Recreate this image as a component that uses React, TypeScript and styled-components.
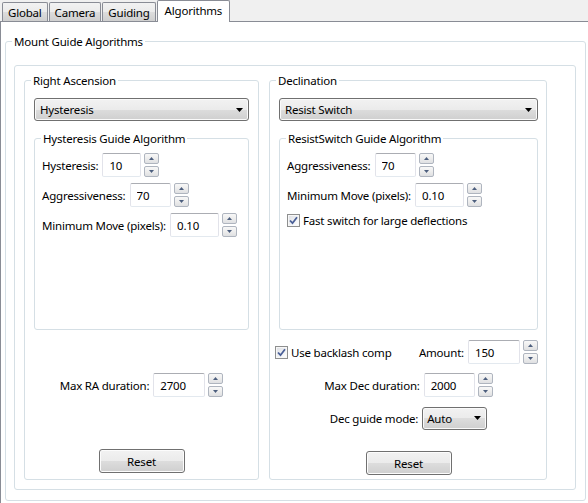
import React from "react";
import styled, { createGlobalStyle } from "styled-components";

const GlobalStyle = createGlobalStyle`
  html, body {
    margin: 0;
    padding: 0;
    background: #f0f0f0;
  }
  body {
    font-family: "Noto Sans", "Open Sans", sans-serif;
    font-size: 11.5px;
    letter-spacing: -0.2px;
    color: #000;
  }
  * {
    box-sizing: border-box;
  }
`;

const Window = styled.div`
  width: 588px;
  height: 503px;
  display: flex;
  flex-direction: column;
  background: #f0f0f0;
  overflow: hidden;
`;

const TabBar = styled.div`
  display: flex;
  align-items: flex-end;
  height: 22px;
  padding-left: 2px;
  margin-bottom: -1px;
  position: relative;
  z-index: 1;
`;

const Tab = styled.div<{ $active?: boolean }>`
  height: ${({ $active }) => ($active ? 22 : 19)}px;
  margin-bottom: ${({ $active }) => ($active ? 0 : 1)}px;
  margin-right: ${({ $active }) => ($active ? 0 : 1)}px;
  padding: ${({ $active }) => ($active ? "0 7px 3px" : "1px 5px 0")};
  display: flex;
  align-items: center;
  border: 1px solid #898c95;
  border-bottom: none;
  border-radius: 2px 2px 0 0;
  background: ${({ $active }) =>
    $active
      ? "#ffffff"
      : "linear-gradient(#f2f2f2 0%, #ebebeb 50%, #dddddd 50%, #cfcfcf 100%)"};
  white-space: nowrap;
`;

const Page = styled.div`
  flex: 1;
  background: #ffffff;
  border-top: 1px solid #898c95;
  border-left: 1px solid #898c95;
  padding: 12px 2px 0 4px;
`;

const Fieldset = styled.fieldset<{ $pad: string; $h?: number }>`
  margin: 0;
  min-width: 0;
  border: 1px solid #d5dfe5;
  border-radius: 3px;
  padding: ${({ $pad }) => $pad};
  height: ${({ $h }) => ($h ? `${$h}px` : "auto")};
`;

const Legend = styled.legend<{ $shift: number }>`
  padding: 0 2px;
  margin-left: ${({ $shift }) => $shift}px;
  line-height: 15px;
  height: 15px;
`;

const InnerPanel = styled.div`
  border: 1px solid #d5dfe5;
  border-radius: 3px;
  padding: 7px 28px 9px 9px;
  display: grid;
  grid-template-columns: 235px 1fr;
  column-gap: 10px;
`;

const Column = styled.div`
  display: flex;
  flex-direction: column;
`;

const Rows = styled.div`
  display: flex;
  flex-direction: column;
  gap: 6px;
`;

const Row = styled.div<{ $mt?: number; $center?: boolean; $between?: boolean }>`
  display: flex;
  align-items: center;
  justify-content: ${({ $center, $between }) =>
    $center ? "center" : $between ? "space-between" : "flex-start"};
  margin-top: ${({ $mt }) => $mt ?? 0}px;
  height: 24px;
`;

const Label = styled.span`
  margin-right: 4px;
  white-space: nowrap;
`;

const TextBox = styled.input<{ $w: number }>`
  width: ${({ $w }) => $w}px;
  height: 24px;
  margin: 0;
  padding: 0 0 0 6px;
  font: inherit;
  letter-spacing: inherit;
  color: #000;
  background: #ffffff;
  border: 1px solid #e2e3ea;
  border-top-color: #abadb3;
  border-bottom-color: #e3e9ef;
  border-radius: 2px;
  outline: none;
`;

const Spinner = styled.div`
  display: flex;
  flex-direction: column;
  gap: 2px;
  margin-left: 3px;
`;

const SpinButton = styled.div`
  width: 15px;
  height: 11px;
  display: flex;
  align-items: center;
  justify-content: center;
  border: 1px solid #afb5bf;
  border-radius: 2px;
  background: linear-gradient(#f8f8f8 0%, #ededed 50%, #dfe0e2 100%);
`;

const Combo = styled.div<{ $w?: number; $mt?: number; $pl?: number }>`
  width: ${({ $w }) => ($w ? `${$w}px` : "100%")};
  height: 23px;
  margin-top: ${({ $mt }) => $mt ?? 0}px;
  padding: 0 5px 0 ${({ $pl }) => $pl ?? 5}px;
  display: flex;
  align-items: center;
  justify-content: space-between;
  border: 1px solid #707070;
  border-radius: 3px;
  background: linear-gradient(#f2f2f2 0%, #ebebeb 50%, #dddddd 50%, #cfcfcf 100%);
  box-shadow: inset 0 0 0 1px #fafafa;
`;

const Button = styled.div<{ $mt: number }>`
  align-self: center;
  width: 86px;
  height: 24px;
  margin-top: ${({ $mt }) => $mt}px;
  display: flex;
  align-items: center;
  justify-content: center;
  border: 1px solid #707070;
  border-radius: 3px;
  background: linear-gradient(#f2f2f2 0%, #ebebeb 50%, #dddddd 50%, #cfcfcf 100%);
  box-shadow: inset 0 0 0 1px #fcfcfc;
`;

const CheckRow = styled.label<{ $shift?: number }>`
  display: flex;
  align-items: center;
  gap: 3px;
  margin-left: ${({ $shift }) => $shift ?? 0}px;
  white-space: nowrap;
`;

const CheckBox = styled.span`
  width: 13px;
  height: 13px;
  display: flex;
  align-items: center;
  justify-content: center;
  border: 1px solid #8e8f8f;
  background: linear-gradient(135deg, #dcdee3 0%, #f2f3f5 60%, #ffffff 100%);
  box-shadow: inset 0 0 0 1px #f7f7f7;
`;

const Amount = styled.div`
  display: flex;
  align-items: center;
`;

const Spacer = styled.div<{ $h: number }>`
  height: ${({ $h }) => $h}px;
  flex: none;
`;

const Arrow = () => (
  <svg width="7" height="4" viewBox="0 0 7 4">
    <path d="M0 0 H7 L3.5 4 Z" fill="#000" />
  </svg>
);

const SpinArrow = ({ up }: { up?: boolean }) => (
  <svg width="5" height="3" viewBox="0 0 5 3">
    <path d={up ? "M0 3 H5 L2.5 0 Z" : "M0 0 H5 L2.5 3 Z"} fill="#4d5f7e" />
  </svg>
);

const Check = () => (
  <svg width="9" height="9" viewBox="0 0 9 9">
    <path
      d="M1 4.5 L3.5 7.2 L8 1.2"
      fill="none"
      stroke="#4a5f97"
      strokeWidth="1.8"
    />
  </svg>
);

interface GroupProps {
  title: string;
  pad: [number, number, number, number];
  height?: number;
  children: React.ReactNode;
}

const Group: React.FC<GroupProps> = ({ title, pad, height, children }) => (
  <Fieldset $pad={pad.map((p) => `${p}px`).join(" ")} $h={height}>
    <Legend $shift={6 - pad[3]}>{title}</Legend>
    {children}
  </Fieldset>
);

const SpinBox: React.FC<{ label?: string; value: string; width: number }> = ({
  label,
  value,
  width,
}) => (
  <>
    {label && <Label>{label}</Label>}
    <TextBox $w={width} defaultValue={value} />
    <Spinner>
      <SpinButton>
        <SpinArrow up />
      </SpinButton>
      <SpinButton>
        <SpinArrow />
      </SpinButton>
    </Spinner>
  </>
);

const Checked: React.FC<{ text: string; shift?: number }> = ({ text, shift }) => (
  <CheckRow $shift={shift}>
    <CheckBox>
      <Check />
    </CheckBox>
    {text}
  </CheckRow>
);

const App: React.FC = () => (
  <Window>
    <GlobalStyle />
    <TabBar>
      <Tab>Global</Tab>
      <Tab>Camera</Tab>
      <Tab>Guiding</Tab>
      <Tab $active>Algorithms</Tab>
    </TabBar>
    <Page>
      <Group title="Mount Guide Algorithms" pad={[16, 9, 10, 8]}>
        <InnerPanel>
          <Group title="Right Ascension" pad={[10, 9, 6, 9]}>
            <Column>
              <Combo>
                Hysteresis
                <Arrow />
              </Combo>
              <Spacer $h={10} />
              <Group title="Hysteresis Guide Algorithm" pad={[7, 7, 7, 7]} height={199}>
                <Rows>
                  <Row>
                    <SpinBox label="Hysteresis:" value="10" width={39} />
                  </Row>
                  <Row>
                    <SpinBox label="Aggressiveness:" value="70" width={41} />
                  </Row>
                  <Row>
                    <SpinBox label="Minimum Move (pixels):" value="0.10" width={49} />
                  </Row>
                </Rows>
              </Group>
              <Row $mt={43} $center>
                <SpinBox label="Max RA duration:" value="2700" width={52} />
              </Row>
              <Button $mt={52}>Reset</Button>
            </Column>
          </Group>
          <Group title="Declination" pad={[10, 8, 4, 9]}>
            <Column>
              <Combo>
                Resist Switch
                <Arrow />
              </Combo>
              <Spacer $h={10} />
              <Group title="ResistSwitch Guide Algorithm" pad={[7, 7, 7, 7]} height={199}>
                <Rows>
                  <Row>
                    <SpinBox label="Aggressiveness:" value="70" width={41} />
                  </Row>
                  <Row>
                    <SpinBox label="Minimum Move (pixels):" value="0.10" width={49} />
                  </Row>
                  <Checked text="Fast switch for large deflections" />
                </Rows>
              </Group>
              <Row $mt={10} $between>
                <Checked text="Use backlash comp" shift={-4} />
                <Amount>
                  <SpinBox label="Amount:" value="150" width={52} />
                </Amount>
              </Row>
              <Row $mt={9} $center>
                <SpinBox label="Max Dec duration:" value="2000" width={51} />
              </Row>
              <Row $mt={9} $center>
                <Label>Dec guide mode:</Label>
                <Combo $w={65} $pl={4}>
                  Auto
                  <Arrow />
                </Combo>
              </Row>
              <Button $mt={21}>Reset</Button>
            </Column>
          </Group>
        </InnerPanel>
      </Group>
    </Page>
  </Window>
);

export default App;
